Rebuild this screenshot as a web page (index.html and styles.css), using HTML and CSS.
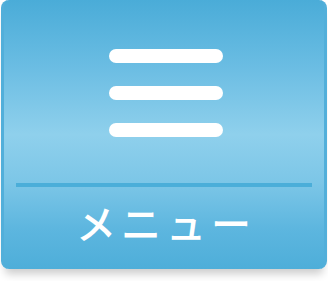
FILE: index.html
```html
<!DOCTYPE html>
<html lang="ja">
<head>
<meta charset="utf-8">
<title>メニュー</title>
<link rel="stylesheet" href="styles.css">
</head>
<body>
<div class="card">
  <div class="icon">
    <span class="bar"></span>
    <span class="bar"></span>
    <span class="bar"></span>
  </div>
  <div class="divider"></div>
  <div class="label">メニュー</div>
</div>
</body>
</html>
```
FILE: styles.css
```css
html, body {
  margin: 0;
  padding: 0;
  background: #ffffff;
}
body {
  width: 328px;
  height: 281px;
  overflow: hidden;
}
.card {
  box-sizing: border-box;
  margin-left: 1px;
  width: 326px;
  height: 269px;
  border-radius: 8px;
  border-left: 3px solid #52afda;
  border-right: 3px solid #52afda;
  background: linear-gradient(to bottom, #4aacd8 0%, #6bbde3 25%, #8fd0ec 50%, #7cc6e7 68%, #5db6df 85%, #4eaed9 100%);
  box-shadow: 0 9px 8px -4px rgba(0, 0, 0, 0.2);
  display: flex;
  flex-direction: column;
}
.icon {
  display: flex;
  flex-direction: column;
  align-items: center;
  gap: 23px;
  padding-top: 49px;
  padding-left: 4px;
}
.bar {
  display: block;
  width: 114px;
  height: 14px;
  border-radius: 7px;
  background: #ffffff;
}
.divider {
  margin: 46px 12px 0;
  height: 4px;
  background: #4baed9;
}
.label {
  margin-top: 15px;
  font-family: "Noto Sans CJK JP", sans-serif;
  font-size: 40px;
  font-weight: 500;
  line-height: 40px;
  color: #ffffff;
  text-align: center;
  letter-spacing: 5px;
  padding-left: 4px;
}
```
